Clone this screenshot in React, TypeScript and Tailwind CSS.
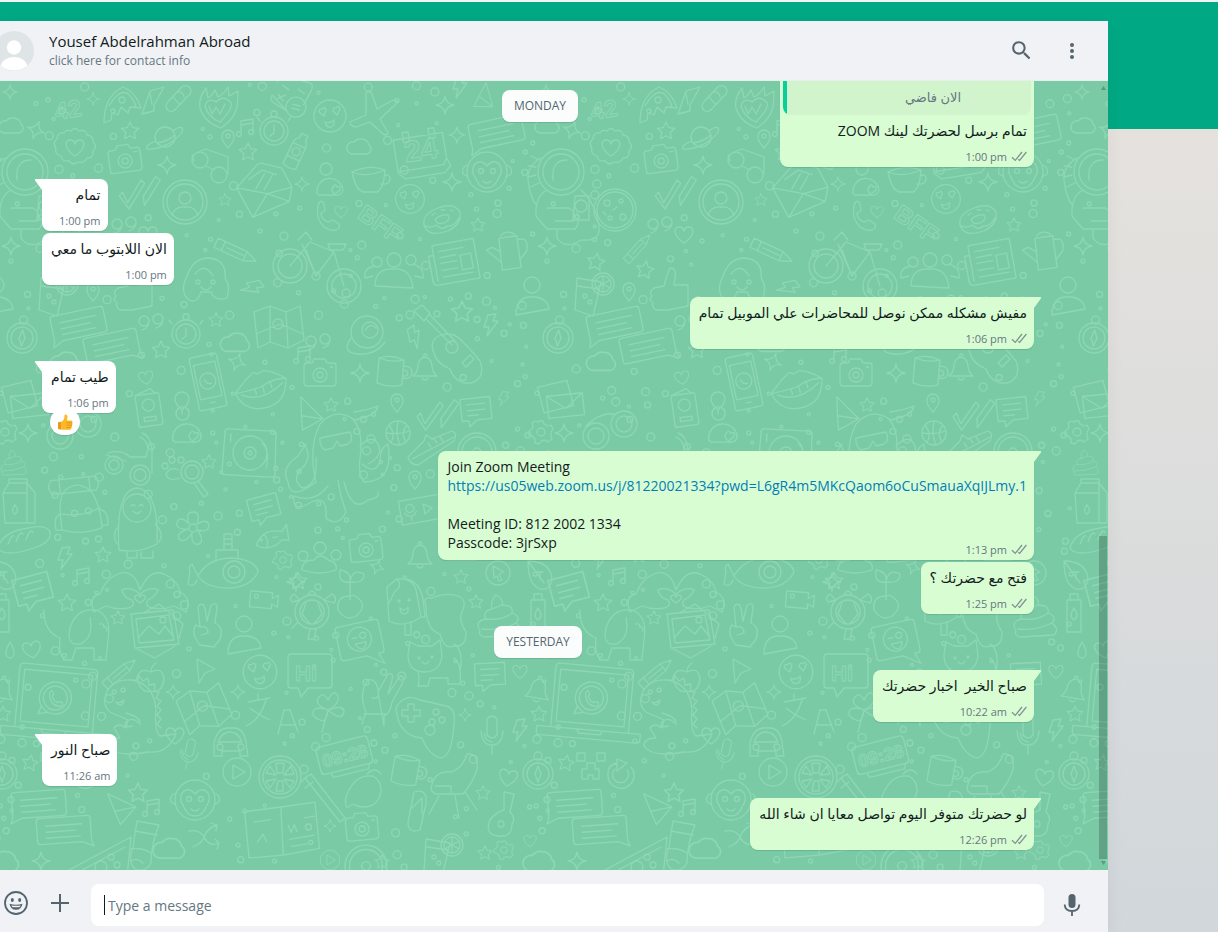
import { ReactNode } from "react";
import { MdSearch } from "react-icons/md";

const c = (x: number, y: number, r: number) =>
  `M${x - r} ${y}a${r} ${r} 0 1 0 ${2 * r} 0a${r} ${r} 0 1 0 ${-2 * r} 0`;

// outline doodles, each one drawn around its own centre
const shapes: Record<string, string> = {
  star: "M0-9l2.6 5.6 6.1.8-4.5 4.2 1.2 6.1L0 4.7l-5.4 3 1.2-6.1-4.5-4.2 6.1-.8z",
  sparkle: "M0-9Q1-1 9 0Q1 1 0 9Q-1 1-9 0Q-1-1 0-9z",
  heart: "M0 8C-12 0-10-8-5-8Q-1-8 0-4Q1-8 5-8C10-8 12 0 0 8z",
  cloud: "M-8 7h15a5 5 0 0 0 2-9a7 7 0 0 0-7-6a8 8 0 0 0-8 3a6 6 0 0 0-2 12z",
  bolt: "M-3-10l8-1-3 7h5L-4 11l2-9h-5z",
  drop: "M0-8Q-5 1-4 4A4 4 0 0 0 4 4Q5 1 0-8z",
  love: c(0, 0, 16) + "M-6 0l-5-4q0-4 3-3q3-3 4 1zM7-1l-4-4q0-4 3-3q3-3 4 1zM-5 6q5 2 9-2q1 7-4 7q-4 0-5-5z",
  pizza: "M-17 19Q-17-8 2-17Q15-12 20 4L9 3 7 9 0 3-3 11-9 9-10 16zM-12 2Q-3-14 6-11Q13-5 15 3" + c(1, -4, 3) + c(-8, 7, 2),
  rocket: "M-8 13L0-10 14-14 4 4 4 10-8 13zM0-8L2 3",
  pill: "M-6 14q-6-4-2-9L3-12q5-4 9 1q2 4-2 8L0 12q-2 3-6 2zM-5-1L4 6M0-7q6 1 7 5",
  flame: "M-18 2Q-20-8-12-18L-10-8Q-6-10-3-16L0-9Q5-11 10-19L11-10Q15-12 20-15Q20 0 18 4Q15 14 3 22Q-14 16-18 2zM-13 0Q-10-9-2-4Q6-12 13-3Q15 3 2 16Q-10 11-13 0M-9 0l3 8 4-7 4 7 5-10",
  calc: "M-18-8q-2-7 4-7H12q6 0 5 7L13 8M-2 18L-17 13q-5-2-3-7zM-12-6l7 3M4-6l7 3M-14 4l6 5M-7 3l-7 5" + c(6, 12, 10) + "M2 10h8M2 14h8",
  plane: "M-6-22q4-3 6 1L5-6 19-14q5-2 7 1L8 4 16 18q-2 4-6 0L-2 7-16 12q-6-1-6-5L-6 0z",
  watch: c(0, 0, 14) + c(0, 0, 10) + c(0, -17, 3) + "M0-6V2l-4 3M-14-10l-3-4M14-10l3-4",
  badge: "M-4-17q4-5 8 0q7-2 8 4q7 1 6 7q5 4 0 9q1 7-6 7q-3 6-9 4q-5 4-9-1q-7 1-8-5q-7-2-5-8q-4-5 1-9q0-7 7-6q2-4 7-2zM0 8C-12 0-10-8-5-8Q-1-8 0-4Q1-8 5-8C10-8 12 0 0 8z",
  saturn: c(0, 0, 10) + "M-9 4Q-20 8-18 12Q-6 13 8 4Q20-5 17-9Q14-11 8-6M-8 6Q4 4 10-2",
  music: "M-5 6V-7L7-9V4M-5-3L7-5" + c(-7, 6, 2.5) + c(5, 4, 2.5),
  pin: "M0 8Q-7 0-6-4A6 6 0 0 1 6-4Q7 0 0 8z" + c(0, -4, 2),
  bottle: "M-7 18V-5Q-6-11-3-12V-17H4V-12Q7-10 7-4V18Q0 21-7 18zM-7-5H7M-7 9H7" + c(0, 2, 4),
  camera: "M-16-8q0-3 3-3h5l2-4H5l2 4h6q3 0 3 3V9q0 3-3 3H-13q-3 0-3-3z" + c(0, 1, 7) + c(0, 1, 3) + "M10-7h3",
  glasses: c(-10, -5, 8) + c(9, 10, 8) + "M-4 1l8 4M-14-12l10-4 22 8v16M-16-4l-2-6",
  astro: c(0, 0, 23) + c(0, 0, 18) + "M-8 8Q-10-12 6-12M-14 18Q-26 24-25 44L-14 57H14Q20 50 16 40M-20-14q-14 8-13 22q2 18 9 26M20 18Q34 30 38 54Q40 70 20 68Q4 78-4 66V57M14 24h14V48H12zM-14 36H8q8 4 4 13H-6" + c(20, 34, 6) + "M-22-12l-8-4M-25-5l-8-1M-25 3l-8 2M-22 11l-8 4",
  calendar: "M-26-14H24V12L27 20 20 26H-20L-26 20zM-26 18H20L24 12M-16-20h6v10h-6zM10-20h6v10h-6z",
  speech: "M-27-12q0-3 3-3H24q3 0 3 3V8q0 3-3 3H-18L-29 16l2-6zM-18-7H18M-18-1H12M-18 5H16",
  speechr: "M27-12q0-3-3-3H-24q-3 0-3 3V8q0 3 3 3H18L29 16l-2-6zM-18-7H18M-18-1H12M-18 5H16",
  monkey: c(0, 0, 20) + "M0-6Q-7-14-13-7Q-16 0-12 5Q-8 16 0 16Q8 16 12 5Q16 0 13-7Q7-14 0-6z" + c(-6, -1, 2.5) + c(6, -1, 2.5) + "M-4 9q4 4 8 0M-19-7q-7 2-5 9l5 3M19-7q7 2 5 9l-5 3",
  cup: "M-18-6Q-14 14-5 14H7Q14 10 15-8Q0-14-18-6Q-4 0 15-8M14-2q6-3 6 3q0 6-9 5",
  dome: "M-13 9A13 13 0 0 1 13 6Q12 12 4 11H-11zM3 3q2-4 4 0q5-2 3 3l-5 4q-5-3-2-7" + c(-4, -15, 6),
  mail: "M-27-5L-4-26Q0-28 3-26L20-20 28 0 24 14-14 26zM-27-5L3 4 28 0M3 4l-17 22M3 4L24 14M-14-12L0-20 14-14M-8-2L2-16M0 0L10-14",
  ticks: "M-17 4l6 10L0-10l4 3L-9 20-20 8zM4 6L14-15l5 3L6 15z",
  contact: c(0, 0, 22) + c(0, 0, 18) + c(0, -4, 6) + "M-13 13Q-10 4 0 5Q10 4 13 13",
  phone: "M-9-14q3-4 5 1l1 6-4 3q0 6 7 9l5-2 6 4q2 4-3 6Q-3 15-9 3Q-12-8-9-14z",
  donut: "M-18 5Q-20-6-4-12Q12-18 18-8Q20 4 6 11Q-14 18-18 5zM-7 0Q-2-6 6-5Q9-2 4 2Q-4 6-7 0M-18 5Q-12 9-6 5Q0 11 5 6Q12 7 17-2M-10-5l3-2M8-10l3 1M-1-10h4",
  cookie: c(0, 0, 21) + c(0, 0, 18) + c(-8, -7, 3) + c(6, -9, 2) + c(8, 7, 3) + c(-5, 8, 2) + "M-2 0l4-3M-12 2l3 3",
  quotes: c(-7, -2, 5) + c(7, -4, 5) + "M-2-2q0 7-7 9M12-4q0 7-7 9",
  pencil: "M-22-5H10L22 0 10 5H-22zM-14-5V5M10-5V5M-10 0H8",
  bike: c(-26, 4, 17) + c(-26, 4, 12) + c(28, 24, 17) + c(28, 24, 12) + "M-26 4L-6-20 18-10 0 14-14-18M18-10L28 24M12-18h18l-3 6H14zM-18-22l8-8 6 8M0 14L-10-12" + c(0, 14, 4),
  group: c(-1, -12, 7) + "M-20 14Q-20-4-1-3Q16-4 18 16zM-22 4L-30 6Q-32-4-20-6M20 4l8 2Q30-4 18-8" + c(-18, -10, 5) + c(16, -12, 5),
  paper: "M-20-20H22V20H-20q-5 0-5-5V-10h5zM-20-10V16M-14-13H10M-14-7H2M-14-1H2M-14 6H2M-14 13H16M6-6h11V9H6z",
  can: "M-8-16H10V16H-9zM-9 8L-22-6-16-8-8-2M10-12q12-2 8 12l-8 8M-6-18q6-6 14 0",
  thumb: "M-16-2L-6-4Q-4-14 0-22Q7-22 5-12L4-5H18V16L-2 20H-14q-5-3-3-7q-5-3-1-7q-4-4 2-8z",
  dog: "M-18-6Q-12-24 4-24Q22-22 20-4Q26 4 22 16Q10 20 6 10L-4 10Q-8 22-16 18Q-26 10-18-6zM-10-8Q0-20 8-6" + c(-7, 0, 2) + c(8, 0, 2) + "M-4 5q5 6 10 0",
  juice: "M-14-14L10-10 2 24-16 18zM-13-6L8-3" + c(12, -8, 11) + c(12, -8, 8) + "M12-16V0M5-12l14 8M5-4l14-8" + c(-6, 4, 2) + c(-1, 10, 2),
  flower: c(0, 0, 4) + "M-4-4Q-8-16 0-16Q8-16 4-4Q14-10 16-3Q16 5 4 2Q12 12 6 16Q-2 18-1 5Q-8 16-14 11Q-17 4-4 1Q-18 2-16-6Q-12-13-4-4",
  rose: c(0, -2, 16) + c(3, -4, 8) + "M-16 4Q-26 18-10 20Q8 22 18 8M-2-4Q4-12 9-6",
  guitar: "M-36-34l8-6 8 8-6 8zM-24-26L2 0M-20-30L5-4M-8-10Q-22-6-16 8Q-14 18 0 24Q6 40 22 38Q36 32 30 16Q22 6 14-2Q4-14-8-10" + c(2, 2, 6) + "M12 18l8-8 4 4-8 8z",
  compass: c(0, 0, 15) + c(0, 0, 11) + c(0, -18, 4) + "M0-8L3 0 0 8-3 0z",
  map: "M-24-14L-8-20 8-14 22-20 26 14 10 22-8 16-20 22zM-8-20v36M8-14L10 22M-22 8L2-2 25 8" + c(0, -2, 5),
  mobile: "M-14-24q0-3 3-3H11q3 0 3 3V24q0 3-3 3H-11q-3 0-3-3zM-11-19H11V16H-11zM-2 21H3" + c(0, -1, 8) + "M-3-3q1 5 6 5",
  lips: "M-26 2Q-12-14-6-17Q0-14 4-18Q12-18 26-8Q24 16 4 19Q-18 22-26 2zM-26 2Q-8 0 0-2Q14-10 26-8M-20 4Q0 14 22-4M-6 0l1 5M2-2l1 6M10-5l1 5",
  mug: "M-12-12Q0-8 13-12V13Q0 17-12 13zM-12-12Q0-17 13-12M13-6q9-1 9 6q0 7-9 6M13-2q5 0 5 3q0 3-5 3",
  bell: "M-12 8Q-7 4-7-3Q-6-10 0-11Q6-10 7-3Q7 4 12 8zM-3 10q3 4 6 0M-2-12q2-4 4 0",
  letters: "M-22-16L8-20 12 6-18 10zM-14-6H22V16H-14zM-14-6L4 8 22-6",
  passport: "M-12-16H10q2 0 2 2V14q0 2-2 2H-12zM-12-16L4-21 8-16" + c(0, -5, 6) + "M-6 7H6V11H-6z",
  balloon: "M0 8Q-7 2-7-3A7 7 0 0 1 7-3Q7 2 0 8zM0 8v4",
  headset: c(-10, 2, 13) + c(-10, 2, 8) + c(18, -10, 13) + c(18, -10, 8) + "M-20-8Q-6-22 8-20",
  scooter: c(-16, 2, 9) + c(-16, 2, 5) + c(10, 12, 10) + c(10, 12, 6) + "M-22-10Q-8-14 0-6H16L18-14Q18-22 10-26M22 10V-14Q20-28 12-30M-24-8L-4-2",
  search: c(2, -8, 11) + c(2, -8, 7) + "M8 1L18 14 14 17 4 3M-10-2Q-22 2-24-6Q-20-14-12-10" + c(-25, -14, 3) + c(-18, -20, 3) + c(-9, -20, 3),
  turntable: "M-26-20q0-3 3-3H22q3 0 3 3L26 20q0 3-3 3H-24q-3 0-3-3z" + c(0, 0, 17) + c(0, 0, 6) + c(0, 0, 2) + "M12-10Q20-4 17 14M-20-18v8" + c(-20, 12, 2),
  gear: c(0, 0, 4) + "M-2-11h4l1 3 4 2 3-1 2 4-2 3v4l1 3-4 3-3-2-4 1-2 3-4-1 0-4-3-3-4-1 1-4 3-2 1-3-1-3 3-2 3 1z",
  milk: "M-16-12L-10-22H8L16-12V18H-14zM-16-12H8L8 18M8-22v10M-10-22v-4H8v4M-4 0Q-9 6-4 9Q1 6-4 0",
  backpack: "M-18 20Q-20-10-12-18Q0-28 12-18Q22-8 22 22Q0 28-18 20zM-18 4Q2 10 22 2M-24-30H20q6 6 0 14H-24q-6-8 0-14M-16-30v14M14-30v14M-18 4q-8 2-6 16h6M22 4q8 2 6 16h-6" + c(-4, 5, 3) + c(10, 4, 3),
  penguin: "M-18 30Q-22-30 0-32Q22-30 20 24Q0 34-18 30zM-18 6q-8 8-2 18M18 4q10 10 4 18" + c(0, -12, 14) + "M-6-14q2-3 4 0M2-14q2-3 4 0M-4-9q4 5 8 0M-10 32v6h10v-6M4 32v6H16v-7",
  card: "M-15-12H15V10H0L-8 16-8 10H-15zM-9-6H9M-9 0H9M-9 5H2",
  bread: "M-26 8Q-22-8 4-12Q22-16 26-8Q28 2 10 8Q-20 18-26 8zM-16 4q4-10 6-8M-8 2q4-12 7-8M2 0q4-12 7-8",
  submarine: "M-30 4Q-20-14 4-14Q28-12 30 0Q22 16 0 16Q-22 16-30 4zM-12-13V-22H10V-14M-4-22V-38H4V-22M-4-33h8M-4-28h8M-30 4l-6-12q-4 2-2 8l-2 12q6 4 9-4" + c(6, 0, 11) + c(6, 0, 6),
  fish: "M-16 4Q-6-12 12-4L18-10 17 6 11 4Q-4 14-16 4zM-6-5Q-2 2-6 8M2 0h5" + c(-10, 0, 1),
  hands: "M-46 24Q-52 8-40 6Q-34-10-22-14Q-6-20 0 2Q10-20 24-14Q38-8 40 4Q52 10 46 24L34 18Q24 22 12 20Q4 18 8 12Q16 8 18 2Q10-2 0 6Q-10-2-18 2Q-16 10-8 12Q-4 18-12 20Q-24 22-34 18zM0 15q-9-6-3-8q3 0 3 2q0-2 3-2q6 2-3 8",
  video: "M-14-8H8V-2L14-6V6L8 3V8H-14z" + c(-8, -3, 2),
  elephant: "M-42-26Q-42-4-26 2Q-28 16-22 24H-14L-10 12H8V24H20L22 4Q26-20 10-26Q-10-28-16-8M-16-8Q-20 10-6 8Q8 2 4-18M14-12q4-1 4 3q3-1 3 4",
  picture: "M-24-16L18-20 24 14-20 18zM-19-11L14-15 19 10-16 13zM-17 8L-6-4 4 4 10-4 18 6M-10-18L4-26 28-6 24 8M-18 19L0 28 20 16" + c(8, -10, 3),
  peace: "M-8 20Q-18 8-12 0L-8 2-10-18Q-6-24-3-17L-1-4 3-20Q9-24 9-17L7-2Q16 2 12 14L6 22zM-8 2q8-2 8 6l-7 2",
  person: c(0, -12, 8) + "M-16 18Q-16 2-4 0H4Q16 2 17 12z",
  paperplane: "M-14-14L16-6 4 14-4 2zM16-6L-4 2",
  octopus: "M-22 30Q-30-4-18-28Q-4-44 14-34Q26-22 22 6Q20 22 26 30M-22 6Q-20 34-36 36Q-48 26-34 14Q-26 4-34-8M-22 30Q-48 50-50 30Q-58 16-40 4L-32-8M26 30Q56 30 50-8Q42-4 42 8Q38 24 24 12M22-6Q34-18 40-8Q46 4 30 12M-10 34Q-24 52-44 44Q-46 60-30 52Q-10 40-12 66Q0 76 8 60Q2 44 0 28M6 30Q14 62 30 48Q42 46 40 40M16-32Q38-36 40-46Q30-42 16-40M-18-14l30-6q4 8-2 12l-8 2-3-5-4 7-8 2q-6-4-5-12",
  ball: c(0, 0, 12) + "M-12 0Q0 2 12-2M0-12Q-3 0 2 12M-9-8Q-2 0-7 10M9-8Q2 0 8 9",
  shoe: "M-24 8L-8-8-6-14 0-10 20-18Q26-16 22-8L-14 16Q-22 16-24 8zM-20 10L22-12M-4-6l3 4M2-10l3 4M8-12l3 4",
  disc: c(0, 0, 19) + c(0, 0, 15) + c(0, 0, 4),
  voice: "M-30-12H62V12H-30zM-6-5L2 0-6 5zM8 0H54" + c(-20, -3, 4) + "M-26 1q6 8 12 0M-20 5v4",
  burger: "M-20-2Q-16-16 0-16Q16-16 20-2zM-22 3Q-14 8-8 3Q0 8 6 3Q14 8 22 3M-20 8H20Q18 16 12 16H-12Q-18 16-20 8z",
  paw: "M-18 12Q-18 2-6 2Q0-6 8 2Q18 4 16 12Q0 18-18 12z" + c(-17, -2, 5) + c(0, -10, 6) + c(16, -3, 5),
  sprout: "M0 8V-14M0-10Q-12-8-10-22Q2-20 0-10Q2-24 14-18Q14-8 0-10M0 4Q-14 4-12 18Q-4 30 6 24Q18 14 8 6Q4 2 0 4",
  turtle: c(0, 0, 17) + c(0, 0, 12) + "M-12-12l-6-6q-6 4-2 8zM12-12L20-18q6 4 2 9zM-14 10l-6 6M4 17l-2 10h-6l2-10M-4-17q4-8 8 0M-6-9L-10 2-2 12M6-9L10 2 2 12",
  icecream: "M-16-16L-6-24Q12-26 14-8L18 14Q0 26-14 18zM-6-24Q0-16-8-12L-14 0M2 20v12h6V19M0-24Q16-24 20-4L22 14 18 14" + c(-4, -2, 1) + c(6, -3, 1) + "M-3 5q5 4 8-1q1 7-4 7q-4-1-4-6",
  bear: "M-20-14Q-24-24-14-22Q0-28 12-24Q22-20 16-8Q12 0 20 12Q20 28 8 26Q-2 30-6 14Q-20 10-20-14",
  swirl: "M-20 16Q-26 6-14 4Q-18-4-8-6Q-10-14-4-20Q4-16 2-10Q14-10 12-2Q22 2 16 8Q24 14 18 20L-16 22Q-22 20-20 16zM-14 4Q2 6 12-2M-8-6L2-10M-18 14Q0 16 16 8",
  cursor: c(0, 0, 12) + "M-5-7L6-1 1 1 4 7 1 8-1 3-4 5z",
  leaf: "M-12-14Q10-14 12 4Q10 16 0 14Q-12 10-12-14zM-12-14L4 8M-4-3h7M0 4V-3",
  tube: "M-7 20V-12H7V20zM-4-12V-18H4V-12M0-4Q-6 4 0 8Q6 4 0-4",
  apple: "M0-8Q-14-14-13 2Q-8 14 0 11Q10 14 13 0Q12-14 0-8Q0-14 5-17",
  arrow: "M-8-12L10-2 0 2-6 12z",
  bubble: "M-22-16q0-3 3-3H19q3 0 3 3V12q0 3-3 3H-2L-9 24-12 15H-19q-3 0-3-3z",
  wink: "M-22-16q0-3 3-3H19q3 0 3 3V12q0 3-3 3H16L20 26 4 15H-19q-3 0-3-3z" + c(0, -3, 12) + c(4, -6, 3) + "M-7-5h5M-5 1H6q-2 7-6 6q-4-1-5-6",
  laptop: "M-38-32q0-4 4-4H36q4 0 4 4V28H-38zM-33-30H35V22H-33zM-52 28H52V34q0 3-4 3H-48q-4 0-4-3zM-12 28l2 4H12l2-4" + c(0, -4, 16) + c(0, -4, 12) + "M-13 5l-3 8 9-2M-6-9q2-4 4 1l-1 3q2 5 6 5l3-1q4 3 0 5Q-6 4-6-9",
  dino: "M-34-22Q-28-38-8-36Q14-32 16-6Q14 14 20 20L36 18Q28 38 8 36Q-24 42-32 30Q-32 22-20 22L-26 12Q-22 6-14 12L-12 4L-30-4Q-38-10-34-22zM-14-3Q-2 0 0 6M-8 10Q-18 12-14 6Q-8 0 0 8M-24-14q4 2 8-2q-2 9-8 2M-4-36l2-5 5 6 5-3 1 7 6-1-1 7 5 1-3 6 5 3-4 5 4 4-4 5 4 4-4 5 4 4" + c(-26, -24, 2) + c(-17, -26, 2),
  translate: "M-22-14L0-18M-12-22v6M-4-16Q-10 4-24 10M-20-8Q-10 0 0 4M8 18L14-6 20-6 28 16M11 9H25",
  clover: "M0 0Q-16-6-8-14Q-4-18 0-10Q6-22 10-14Q12-6 0 0Q16-6 16 2Q14 12 0 0Q-2 14-8 10Q-18 6-14 0Q-10-4 0 0L-6 22",
  hand: "M-24 26L-20 14Q-28-4-18-18Q-10-20-8-8Q-6 2-14 0M-8-6L2-24Q8-26 6-18L2-4L14-22Q20-22 16-14L6 4Q4 16-2 18L-2 28zM-22 16H0",
  car: "M-16 14V0Q-12-14-2-14H6Q14-12 16 0L18 14H10V9H-8V14zM-12 0Q-8-10 0-10Q8-10 12 0z" + c(-10, 5, 3) + c(11, 5, 3),
  mic: "M-5-16Q0-22 5-16V0Q0 6-5 0zM-11-4Q-10 10 0 10Q10 10 11-4M0 10V19M-8-2q1 8 8 9",
  play: c(0, 0, 14) + "M-4-7L8 0-4 7z",
  orange: c(0, 0, 21) + c(0, 0, 17) + "M-3-4L-4-14H4L3-4zM4-2L11-11 14-3zM4 2L14 4 10 11zM3 4L3 14H-4L-2 4zM-4 2L-10 11-14 4zM-4-2L-14-4-10-11z",
  clock: "M-27-11q0-4 4-4H22q4 0 4 4V9q0 4-4 4H-23q-4 0-4-4zM-18 13L-16 18H20L22 13",
  brush: "M-20-22L-14-26 20 18 15 22zM-24-18l6-6M-20-12l8-6",
  acorn: "M-16 0Q-8-16 8-14Q20-6 14 8Q8 20-8 16Q-12 12-18 18Q-22 10-16 0zM2-16Q10-24 16-16",
  sock: "M-8-24L14-20Q6 0 6 18Q0 28-10 24Q-18 16-12 2zM-10-14L12-10M-14 4Q-4 2 6 8M-14 16Q-8 12-2 18",
  book: "M-36-18L0-24 34-30 40 16 4 24-30 28zM0-24L4 24M-26-8L-10-11M-22 12l5-8 4 7M8-6l3 7 3-8 3 7M24-14L34-16M10 8L34 3M12 15L28 12",
  cross: "M-16-6Q-4-8 0 2Q6 10 14 6M14 6l-4-4M14 6l-2 6M-12 10Q-2 6 0-2Q4-10 12-12M12-12l-6-2M12-12l-1 6",
  cat: "M-22-10L-20-22-12-18H2L10-24 12-8Q10 8-6 8Q-22 8-22-10zM-12 8Q-10 16-12 22H-2L0 14H18V20H30Q32 0 24-6M30 8Q34-14 24-20" + c(-11, -6, 1) + c(2, -7, 1) + "M-8-2q4 4 7-1",
  pad: "M-32-16Q-24-32-8-24L18-18Q28-16 26 0Q24 34 12 34Q0 30-6 14Q-30 12-32-16z" + c(8, -12, 3) + c(14, -4, 3) + c(4, -2, 3) + c(2, 6, 5) + "M-20-14v-6h6v6h6v6h-6v6h-6v-6h-6v-6z",
  chair: "M-24 6Q-22-14-4-12Q8-16 12-30Q24-32 22-14Q18-2 8 10H-20zM-16 12L-26 30M0 12L4 34M10 8L22 26M-20 2H-4V10",
  uke: "M2-24L12-22 8-4Q14 2 10 8Q10 22-4 20Q-18 18-12 4Q-6-4 2-6zM-2 4" + c(-1, 8, 3),
  flops: "M-4-20Q10-24 8-8L2 18Q-10 22-10 10zM-6-4L4-14L4 2",
  creeper: "M-14-14h8v8h-8zM6-14h8v8H6zM-4-4H4V2H8V12H2V8H-3V12H-9V2H-4z",
  refresh: "M-4-8Q-14-6-13 4A13 13 0 1 0 10-4M-6-2A8 8 0 1 0 6-1M-4-12v12L6-8z",
  melon: "M-30 14L34-20 30 20M-24 18L28-10" + c(14, 0, 3) + c(20, 8, 3) + c(4, 10, 6),
};

const doodles: [string, number, number, number?, number?][] = [
  ["pizza", 121, 104], ["rocket", 150, 101], ["pill", 177, 98, 10], ["flame", 218, 106], ["calc", 293, 94, 14],
  ["love", 330, 116], ["plane", 372, 115], ["watch", 274, 131], ["badge", 75, 148], ["star", 130, 131],
  ["sparkle", 93, 99, 0, 0.7], ["sparkle", 36, 130, 20], ["saturn", 165, 137], ["music", 246, 128], ["pin", 228, 140],
  ["star", 248, 152], ["bottle", 297, 150, 25], ["cloud", 360, 147], ["cloud", 12, 126], ["camera", 125, 160, -8],
  ["glasses", 210, 165], ["sparkle", 167, 165], ["astro", 25, 172], ["calendar", 421, 150, -9], ["speech", 497, 134, -12],
  ["monkey", 487, 172], ["cup", 370, 178], ["dome", 330, 184], ["mail", 264, 190, -6], ["sparkle", 302, 184, 0, 0.8],
  ["sparkle", 452, 182], ["sparkle", 457, 135, 0, 0.9], ["sparkle", 445, 105], ["ticks", 140, 190, 6], ["contact", 185, 202],
  ["star", 225, 200, 0, 0.7], ["love", 410, 199, 0, 0.9], ["phone", 328, 217], ["heart", 341, 212, 0, 0.7], ["donut", 442, 220],
  ["star", 478, 225, 0, 0.8], ["cookie", 79, 210], ["quotes", 124, 226], ["pencil", 236, 252, 25], ["heart", 148, 235],
  ["bike", 316, 262], ["group", 395, 272], ["paper", 455, 262, -10], ["can", 509, 253, -8], ["sparkle", 11, 246],
  ["pencil", 102, 248, -48, 0.8], ["star", 60, 262, 10], ["star", 109, 270, 10], ["thumb", 134, 290], ["dog", 205, 282],
  ["bolt", 252, 288, 60], ["person", -4, 297], ["juice", 55, 292], ["pin", 93, 293], ["star", 462, 312, 0, 1.2],
  ["bolt", 491, 325], ["bolt", 415, 337, -30], ["rose", 367, 334], ["guitar", 450, 345], ["quotes", 151, 323],
  ["quotes", 318, 343], ["watch", 186, 334], ["compass", 22, 338, 5], ["speech", 79, 326, -12], ["speechr", 112, 348, -12],
  ["star", 161, 350], ["star", 216, 320, 0, 0.8], ["cloud", 236, 343, 0, 1.2], ["cloud", 66, 362, 0, 1.2], ["map", 278, 326],
  ["mobile", 208, 382, -12], ["lips", 261, 389, -6], ["camera", 320, 374], ["mug", 390, 371, 5], ["bell", 425, 368],
  ["sparkle", 360, 373], ["sparkle", 237, 362, 20], ["letters", 25, 401, -6], ["passport", 149, 410, -8], ["balloon", 182, 402],
  ["heart", 146, 378, -10, 0.8], ["dome", 187, 430, 0, 1.1], ["headset", 70, 434], ["scooter", 130, 463], ["search", 190, 480],
  ["star", 209, 462, 0, 0.8], ["turntable", 250, 453, 3], ["sparkle", 28, 433], ["gear", 5, 432], ["music", 303, 355],
  ["swirl", 14, 462, 0, 0.6], ["milk", 19, 505], ["backpack", 78, 508, -6], ["penguin", 137, 520], ["flower", 193, 528],
  ["card", 264, 508, -15], ["bread", 24, 540], ["bolt", 65, 558], ["star", 103, 555, 0, 0.9], ["submarine", 228, 572],
  ["fish", 271, 538, -12], ["gear", 283, 560, 0, 0.8], ["hands", 140, 588], ["card", 33, 590, -15, 1.2], ["star", 67, 603],
  ["music", 82, 577], ["sparkle", 296, 582], ["video", 264, 600, 5], ["elephant", 86, 636], ["picture", 155, 630],
  ["peace", 208, 625], ["person", 244, 636], ["star", 118, 618, 0, 0.8], ["paperplane", 306, 416, 30], ["star", 331, 405, 0, 0.8],
  ["octopus", 338, 452], ["pin", 397, 404], ["ticks", 438, 412, 10], ["card", 476, 410, -6], ["bolt", 504, 399, 10, 0.7],
  ["ball", 398, 433], ["shoe", 432, 449], ["disc", 477, 452], ["voice", 430, 508, -10], ["pin", 415, 481],
  ["camera", 366, 549, -6], ["bell", 420, 556], ["burger", 462, 544], ["paw", 320, 558], ["sprout", 350, 592],
  ["star", 298, 581], ["sparkle", 377, 567, 20, 0.8], ["turtle", 312, 612], ["icecream", 403, 603], ["bear", 446, 620],
  ["star", 461, 577, 0, 0.8], ["swirl", 500, 615], ["cursor", 498, 573], ["star", 476, 602, 0, 0.8], ["leaf", 4, 575],
  ["tube", 2, 612], ["drop", 10, 650], ["heart", 32, 650, -10], ["pencil", 120, 673, -40, 0.9], ["apple", 151, 680],
  ["arrow", 205, 671], ["love", 260, 672, 0, 1.05], ["bubble", 310, 673], ["wink", 360, 642, -12], ["laptop", 55, 702, 5],
  ["dino", 140, 716], ["sparkle", 173, 692, 0, 0.8], ["map", 203, 708, -16], ["sparkle", 238, 692, 0, 0.8], ["translate", 270, 716],
  ["clover", 328, 710], ["hand", 386, 698], ["car", 230, 742], ["heart", 175, 736], ["mic", 189, 754, 12, 0.8],
  ["play", 237, 772], ["orange", 280, 777], ["clock", 345, 756, -14], ["monkey", 195, 800], ["brush", 325, 800],
  ["acorn", 365, 790], ["star", 138, 793, 0, 1.1], ["music", 152, 808], ["speech", 39, 806, -4], ["speechr", 64, 832, -4],
  ["paperplane", 119, 810, 10], ["sock", 145, 845], ["cloud", 170, 849, 0, 1.3], ["book", 280, 831, 2], ["camera", 362, 828, -5],
  ["cross", 205, 837], ["cat", 430, 664], ["card", 490, 675, -3], ["heart", 520, 672, 0, 0.8], ["bell", 538, 690, 10],
  ["pad", 428, 724], ["mic", 492, 735], ["bolt", 520, 730], ["compass", 538, 774], ["star", 3, 714, 0, 0.9],
  ["sparkle", 465, 715, 0, 0.7], ["chair", 455, 784], ["uke", 502, 816], ["heart", 508, 778, 10], ["star", 483, 793, 0, 0.8],
  ["flops", 418, 812], ["juice", 440, 853], ["gear", 504, 850, 0, 0.8], ["star", 485, 853, 0, 0.8], ["heart", 530, 841, 0, 0.7],
  ["cloud", 4, 862, 0, 1.3], ["star", 30, 763, 10, 0.9], ["creeper", 55, 767], ["refresh", 85, 771], ["melon", 97, 857],
  ["mug", 405, 770, 10], ["play", 330, 860, 0, 0.7], ["disc", 366, 866, 0, 1.1], ["sparkle", 41, 861], ["sparkle", 330, 826, 0, 0.7],
  ["star", 382, 862, 0, 0.8], ["bolt", 460, 87], ["paperplane", 482, 98, 60, 0.8], ["sparkle", 10, 92, 0, 0.8],
];

// little bubbles that fill the room between the doodles
const dots: [number, number, number][] = [];
let seed = 7;
const rand = () => (seed = (seed * 16807) % 2147483647) / 2147483647;
for (let i = 0; i < 5000 && dots.length < 330; i++) {
  const x = rand() * 536;
  const y = 84 + rand() * 784;
  const r = [1.5, 2, 3, 4][Math.floor(rand() * 4)];
  const free =
    doodles.every(([name, dx, dy]) => {
      const small = ["star", "sparkle", "heart", "pin", "music", "bolt", "drop", "gear"].includes(name);
      return Math.hypot(dx - x, dy - y) > (small ? 14 : 25);
    }) && dots.every(([dx, dy]) => Math.hypot(dx - x, dy - y) > 10);
  if (free) dots.push([x, y, r]);
}

function Wallpaper() {
  return (
    <svg className="absolute inset-0 w-full h-full" aria-hidden="true">
      <defs>
        <g id="tile" fill="none" stroke="#8ed7b4" strokeWidth="1.3" strokeLinejoin="round" strokeLinecap="round">
          {doodles.map(([name, x, y, rot = 0, scale = 1], i) => (
            <path key={i} d={shapes[name]} transform={`translate(${x} ${y}) rotate(${rot}) scale(${scale})`} />
          ))}
          {dots.map(([x, y, r], i) => (
            <circle key={i} cx={x} cy={y} r={r} />
          ))}
          <g fontFamily="Liberation Sans, sans-serif" fontWeight="700" textAnchor="middle" strokeWidth="1">
            <text x="68" y="118" fontSize="24" transform="rotate(-10 68 110)">42</text>
            <text x="421" y="160" fontSize="30" transform="rotate(-9 421 150)">24</text>
            <text x="380" y="232" fontSize="24" transform="rotate(35 380 224)">BFF</text>
            <text x="306" y="681" fontSize="22">Hi</text>
            <text x="345" y="762" fontSize="18" transform="rotate(-14 345 756)">09:28</text>
          </g>
        </g>
      </defs>
      <g transform="translate(0 -81)">
        <use href="#tile" x="-536" />
        <use href="#tile" />
        <use href="#tile" x="536" />
        <use href="#tile" x="1072" />
        <use href="#tile" x="1608" />
      </g>
    </svg>
  );
}

function Checks() {
  return (
    <svg width="16" height="11" viewBox="0 0 16 11" fill="none" stroke="#7f9290" strokeWidth="1.3" role="img" aria-label="Delivered">
      <path d="M1 6.2L4.2 9.4 11 1M7.3 8.2L8.6 9.4 15.4 1" />
    </svg>
  );
}

type BubbleProps = {
  time: string;
  mine?: boolean;
  tail?: boolean;
  rtl?: boolean;
  className?: string;
  quote?: string;
  reaction?: ReactNode;
  children: ReactNode;
};

function Bubble({ time, mine, tail, rtl = true, className = "", quote, reaction, children }: BubbleProps) {
  const side = mine
    ? "self-end bg-[#d9fdd3] " + (tail ? "rounded-tr-none" : "")
    : "self-start bg-white " + (tail ? "rounded-tl-none" : "");
  return (
    <div className={`relative rounded-lg shadow-[0_1px_1px_rgba(11,20,26,0.13)] ${side} ${className}`}>
      {tail && (
        <svg
          className={mine ? "absolute top-0 left-full" : "absolute top-0 right-full"}
          width="8"
          height="12"
          viewBox="0 0 8 12"
          aria-hidden="true"
        >
          {mine ? <path d="M0 0H6Q8 0 6.5 2L0 11z" fill="#d9fdd3" /> : <path d="M8 0H2Q0 0 1.5 2L8 11z" fill="#fff" />}
        </svg>
      )}
      {quote && (
        <div className="mx-[3px] h-16 rounded-lg overflow-hidden bg-[#d1f4cc] flex">
          <span className="w-1 bg-[#06cf9c]" />
          <p dir="rtl" className="flex-1 self-end pr-[70px] pb-2 text-[13px] leading-5 text-[#667781]">
            {quote}
          </p>
        </div>
      )}
      <div className="pt-[6px] pb-[3px] pl-[9px] pr-[7px]">
        <div dir={rtl ? "rtl" : "ltr"} className="text-[14px] leading-[19px] text-[#111b21] whitespace-pre">
          {children}
        </div>
        <div
          className={`flex items-center justify-end gap-1 pl-2 text-[11px] leading-[15px] text-[#667781] ${rtl ? "mt-[9px]" : "-mt-[10px]"}`}
        >
          <span>{time}</span>
          {mine && <Checks />}
        </div>
      </div>
      {reaction}
    </div>
  );
}

function Day({ children }: { children: ReactNode }) {
  return (
    <div className="h-8 px-3 flex items-center rounded-lg bg-[#fafdfc] text-[12px] text-[#54656f] shadow-[0_1px_1px_rgba(11,20,26,0.13)]">
      {children}
    </div>
  );
}

function Reaction() {
  return (
    <div className="absolute left-2 -bottom-[22px] w-[30px] h-[26px] rounded-full bg-white flex items-center justify-center shadow-[0_1px_1px_rgba(11,20,26,0.13)]">
      <svg width="16" height="17" viewBox="0 0 16 17" role="img" aria-label="Thumbs up">
        <path d="M1 8.5L5 7.5C7 6 7.5 4 7.5 1.5C7.5 0 10.5 0 10.5 3L10 6.5H14.5Q16 7 15.3 8.8Q16 10 15 11.2Q15.5 12.7 14.3 13.6Q14.5 15.2 13 15.8H6.5L1 15z" fill="#fcb826" />
        <path d="M9.5 8.8H15M9.5 11.2H15M9.5 13.6H14.3" stroke="#e08a1b" strokeWidth=".8" />
        <path d="M1 8.5L4 7.8V15.5L1 15z" fill="#e79a1f" />
      </svg>
    </div>
  );
}

export default function App() {
  return (
    <div className="h-screen flex flex-col pt-[21px] pr-[110px] font-['Open_Sans','DejaVu_Sans',sans-serif] bg-[linear-gradient(to_bottom,#f3f4f4_0,#f3f4f4_2px,#00a884_2px,#00a884_129px,#e5e2de_129px,#d1d7db_100%)]">
      <div className="flex-1 min-h-0 flex flex-col shadow-[0_6px_18px_rgba(11,20,26,0.05)]">
        <header className="h-[60px] shrink-0 bg-[#f0f2f5] flex items-center pr-6 border-b border-[#e3f0ec]">
          <svg className="-ml-[6px] shrink-0" width="40" height="40" viewBox="0 0 40 40" aria-hidden="true">
            <circle cx="20" cy="20" r="20" fill="#dfe5e7" />
            <circle cx="20" cy="16.5" r="7.2" fill="#fff" />
            <path d="M6.5 34.5Q10 26 20 26Q30 26 33.5 34.5Q28 39.5 20 39.5Q12 39.5 6.5 34.5z" fill="#fff" />
          </svg>
          <div className="flex-1 pl-[15px]">
            <h1 className="text-[15px] leading-5 text-[#111b21]">Yousef Abdelrahman Abroad</h1>
            <p className="text-[12px] leading-5 text-[#667781]">click here for contact info</p>
          </div>
          <div className="flex items-center gap-[26px] text-[#54656f]">
            <button aria-label="Search">
              <MdSearch size={25} />
            </button>
            <button aria-label="Menu">
              <svg width="24" height="24" viewBox="0 0 24 24" fill="currentColor">
                <circle cx="12" cy="6" r="2" />
                <circle cx="12" cy="12" r="2" />
                <circle cx="12" cy="18" r="2" />
              </svg>
            </button>
          </div>
        </header>

        <main className="relative flex-1 min-h-0 overflow-hidden bg-[#7acba5]">
          <Wallpaper />
          <div className="relative h-full flex flex-col justify-end pl-[42px] pr-[74px] pb-5">
            <Bubble mine time="1:00 pm" quote="الان فاضي" className="w-[254px]">
              تمام برسل لحضرتك لينك ZOOM
            </Bubble>
            <Bubble tail time="1:00 pm" className="mt-3">
              تمام
            </Bubble>
            <Bubble time="1:00 pm" className="mt-[2px]">
              الان اللابتوب ما معي
            </Bubble>
            <Bubble mine tail time="1:06 pm" className="mt-3">
              مفيش مشكله ممكن نوصل للمحاضرات علي الموبيل تمام
            </Bubble>
            <Bubble tail time="1:06 pm" className="mt-3" reaction={<Reaction />}>
              طيب تمام
            </Bubble>
            <Bubble mine tail rtl={false} time="1:13 pm" className="mt-[38px]">
              Join Zoom Meeting{"\n"}
              <a
                href="https://us05web.zoom.us/j/81220021334?pwd=L6gR4m5MKcQaom6oCuSmauaXqIJLmy.1"
                className="text-[#027eb5]"
              >
                https://us05web.zoom.us/j/81220021334?pwd=L6gR4m5MKcQaom6oCuSmauaXqIJLmy.1
              </a>
              {"\n\n"}Meeting ID: 812 2002 1334{"\n"}Passcode: 3jrSxp
            </Bubble>
            <Bubble mine time="1:25 pm" className="mt-[2px]">
              فتح مع حضرتك ؟
            </Bubble>
            <div className="self-center mt-3">
              <Day>YESTERDAY</Day>
            </div>
            <Bubble mine tail time="10:22 am" className="mt-3">
              {"صباح الخير  اخبار حضرتك"}
            </Bubble>
            <Bubble tail time="11:26 am" className="mt-3">
              صباح النور
            </Bubble>
            <Bubble mine tail time="12:26 pm" className="mt-3">
              لو حضرتك متوفر اليوم تواصل معايا ان شاء الله
            </Bubble>
          </div>

          <div className="absolute top-[9px] inset-x-0 pr-7 flex justify-center">
            <Day>MONDAY</Day>
          </div>

          {/* scrollbar */}
          <div className="absolute inset-y-0 right-0 w-[9px] flex flex-col items-center justify-between py-[5px]" aria-hidden="true">
            <svg width="5" height="4" viewBox="0 0 5 4">
              <path d="M0 4L2.5 0 5 4z" fill="#5b9a7f" />
            </svg>
            <div className="w-full flex-1 flex flex-col justify-end pb-[2px]">
              <div className="h-[42%] mr-px bg-black/20" />
            </div>
            <svg width="5" height="4" viewBox="0 0 5 4">
              <path d="M0 0L2.5 4 5 0z" fill="#5b9a7f" />
            </svg>
          </div>
        </main>

        <footer className="shrink-0 bg-[#f0f2f5] flex items-center pt-[14px] pb-[6px] pl-1 pr-6 text-[#54656f]">
          <div className="flex gap-5 pb-1">
            <button aria-label="Emoji">
              <svg width="24" height="24" viewBox="0 0 24 24" fill="currentColor">
                <circle cx="12" cy="12" r="11" fill="none" stroke="currentColor" strokeWidth="1.8" />
                <ellipse cx="8.3" cy="9" rx="1.5" ry="2" />
                <ellipse cx="15.7" cy="9" rx="1.5" ry="2" />
                <path d="M5.5 12.8Q12 14.5 18.5 12.8Q17.5 18.8 12 18.8Q6.5 18.8 5.5 12.8z" />
                <path d="M7.5 14.4Q12 15.3 16.5 14.4L15.8 16Q12 16.7 8.2 16z" fill="#f0f2f5" />
              </svg>
            </button>
            <button aria-label="Attach">
              <svg width="24" height="24" viewBox="0 0 24 24" fill="none" stroke="currentColor" strokeWidth="2">
                <path d="M12 3V21M3 12H21" />
              </svg>
            </button>
          </div>
          <div className="flex-1 ml-[19px] mr-4 h-[42px] pl-[13px] pr-3 flex items-center rounded-lg bg-white">
            <span className="w-px h-5 bg-[#111b21]" />
            <input
              type="text"
              aria-label="Message"
              placeholder="Type a message"
              className="flex-1 ml-[3px] text-[14px] text-[#111b21] placeholder:text-[#667781] outline-none"
            />
          </div>
          <button aria-label="Record voice message">
            <svg width="24" height="24" viewBox="0 0 24 24" fill="currentColor">
              <rect x="8.5" y="1" width="7" height="14" rx="3.5" />
              <path d="M4.700 11.500Q5 18 12 18Q19 18 19.300 11.500M12 18V23" fill="none" stroke="currentColor" strokeWidth="1.8" />
            </svg>
          </button>
        </footer>
      </div>
    </div>
  );
}
